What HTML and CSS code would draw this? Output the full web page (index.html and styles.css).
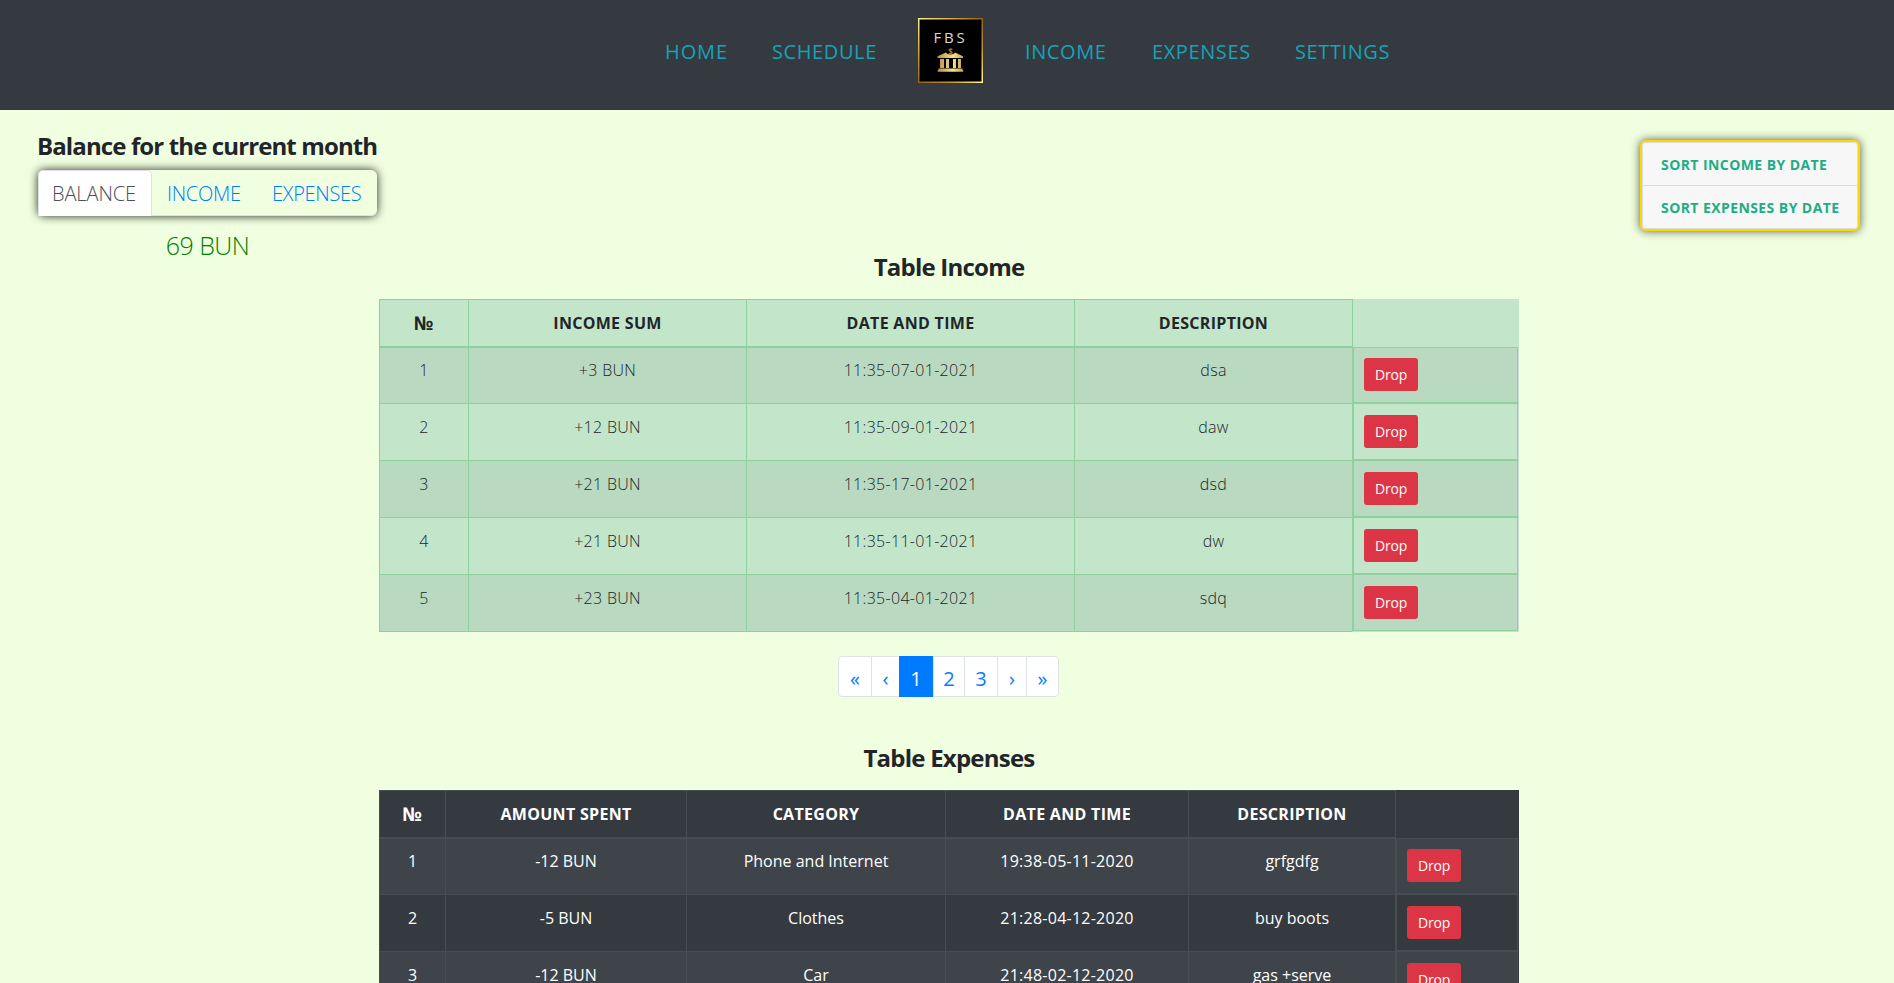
FILE: index.html
```html
<!DOCTYPE html>
<html lang="en">
<head>
<meta charset="utf-8">
<title>FBS</title>
<link rel="stylesheet" href="styles.css">
</head>
<body>
<header class="navbar">
  <nav class="nav nav-left"><a class="w-home">HOME</a><a class="w-schedule">SCHEDULE</a></nav>
  <svg class="logo" width="65" height="65" viewBox="0 0 65 65">
    <defs>
      <linearGradient id="frame" x1="0" y1="0" x2="1" y2="1"><stop offset="0" stop-color="#fbf08c"/><stop offset=".25" stop-color="#d6a94a"/><stop offset=".5" stop-color="#955f1c"/><stop offset=".75" stop-color="#c4923c"/><stop offset="1" stop-color="#fff697"/></linearGradient>
      <linearGradient id="gold" x1="0" y1="0" x2="1" y2="0"><stop offset="0" stop-color="#b98a45"/><stop offset=".6" stop-color="#f5e28a"/><stop offset="1" stop-color="#c99c50"/></linearGradient>
    </defs>
    <rect x=".75" y=".75" width="63.5" height="63.5" fill="#000" stroke="url(#frame)" stroke-width="1.5"/>
    <text class="logo-text" x="15.5" y="25">FBS</text>
    <path fill="url(#gold)" d="M19.5 40v-1.8L28 34.5c1 2.5 8 2.5 9 0l8 3.700V40zM22 41h4v9h-4zM28 41h3v9h-3zM35 41h3v9h-3zM40 41h3v9h-3zM20.500 50.500h24v1.300h.7v1.900H19.700v-1.900h.8z"/>
    <text class="logo-coin" x="32.500" y="37.300">$</text>
  </svg>
  <nav class="nav nav-right"><a class="w-income">INCOME</a><a class="w-expenses">EXPENSES</a><a class="w-settings">SETTINGS</a></nav>
</header>
<section class="summary">
  <div class="balance">
    <h2 class="title balance-title">Balance for the current month</h2>
    <div class="tabs"><a class="tab active">BALANCE</a><a class="tab tab-income">INCOME</a><a class="tab tab-expenses">EXPENSES</a></div>
    <div class="amount">69 BUN</div>
  </div>
  <div class="sort"><a>SORT INCOME BY DATE</a><a class="sort-exp">SORT EXPENSES BY DATE</a></div>
</section>
<main class="content">
  <h2 class="title">Table Income</h2>
  <div class="table income">
    <div class="row head"><b>№</b><b>INCOME SUM</b><b>DATE AND TIME</b><b>DESCRIPTION</b><b></b></div>
    <div class="row"><span>1</span><span>+3 BUN</span><span>11:35-07-01-2021</span><span>dsa</span><div class="action"><div class="box"><button>Drop</button></div></div></div>
    <div class="row"><span>2</span><span>+12 BUN</span><span>11:35-09-01-2021</span><span>daw</span><div class="action"><div class="box"><button>Drop</button></div></div></div>
    <div class="row"><span>3</span><span>+21 BUN</span><span>11:35-17-01-2021</span><span>dsd</span><div class="action"><div class="box"><button>Drop</button></div></div></div>
    <div class="row"><span>4</span><span>+21 BUN</span><span>11:35-11-01-2021</span><span>dw</span><div class="action"><div class="box"><button>Drop</button></div></div></div>
    <div class="row"><span>5</span><span>+23 BUN</span><span>11:35-04-01-2021</span><span>sdq</span><div class="action"><div class="box"><button>Drop</button></div></div></div>
  </div>
  <div class="pages"><a>«</a><a>‹</a><a class="on">1</a><a>2</a><a>3</a><a>›</a><a>»</a></div>
  <h2 class="title">Table Expenses</h2>
  <div class="table expenses">
    <div class="row head"><b>№</b><b>AMOUNT SPENT</b><b>CATEGORY</b><b>DATE AND TIME</b><b>DESCRIPTION</b><b></b></div>
    <div class="row"><span>1</span><span>-12 BUN</span><span>Phone and Internet</span><span class="date">19:38-05-11-2020</span><span>grfgdfg</span><div class="action"><div class="box"><button>Drop</button></div></div></div>
    <div class="row"><span>2</span><span>-5 BUN</span><span>Clothes</span><span class="date">21:28-04-12-2020</span><span>buy boots</span><div class="action"><div class="box"><button>Drop</button></div></div></div>
    <div class="row"><span>3</span><span>-12 BUN</span><span>Car</span><span class="date">21:48-02-12-2020</span><span>gas +serve</span><div class="action"><div class="box"><button>Drop</button></div></div></div>
  </div>
</main>
</body>
</html>
```
FILE: styles.css
```css
* { box-sizing: border-box; }
body { margin: 0; height: 983px; overflow: hidden; background: #f0ffdf; color: #212529; font-family: "Open Sans", "Noto Sans", sans-serif; font-size: 16px; white-space: nowrap; }
.navbar { height: 110px; background: #343a40; display: flex; padding: 18px 0 0 665px; }
.nav { display: flex; padding-top: 19px; line-height: 30px; font-size: 20px; letter-spacing: .6px; color: #17a2b8; }
.nav-left { width: 253px; }
.nav-right { padding-left: 42px; }
.w-home { width: 107px; letter-spacing: .9px; }
.w-income { width: 127px; }
.w-expenses { width: 143px; }
.logo-text { font-family: "Open Sans", sans-serif; font-size: 15px; fill: #d8d8d8; letter-spacing: 2.800px; }
.logo-coin { font-family: "Open Sans", sans-serif; font-size: 8px; font-weight: 700; fill: #b17b34; text-anchor: middle; }
.title { margin: 0; font-size: 24px; font-weight: 700; line-height: 31px; letter-spacing: -.77px; }
.balance-title { height: 30px; margin-left: -1px; letter-spacing: -.88px; line-height: 32px; }
.summary { height: 141px; display: flex; justify-content: space-between; padding: 0 34px 0 38px; }
.balance { width: 339px; padding-top: 20px; }
.tabs { margin-top: 10px; height: 46px; display: flex; border-radius: 6px; border-bottom: 1px solid #dee2e6; box-shadow: 0 0 10px rgba(0,0,0,.85); font-size: 20px; font-weight: 340; line-height: 48px; letter-spacing: -.3px; color: #007bff; }
.tab { height: 46px; padding-left: 15px; width: 105px; }
.tab.active { width: 114px; padding-left: 13px; background: #fff; border: 1px solid #dee2e6; border-bottom: 0; border-radius: 5px 5px 0 0; color: #495057; line-height: 46px; letter-spacing: -.1px; }
.amount { margin-top: 12px; font-size: 25px; font-weight: 340; line-height: 34px; letter-spacing: -.5px; color: #008000; text-align: center; }
.sort { margin-top: 30px; width: 220px; height: 91px; border: 2px solid #ffd600; border-radius: 6px; background: #f7f7f7; box-shadow: 0 0 10px rgba(0,0,0,.65); font-size: 14px; font-weight: 700; letter-spacing: .42px; color: #20ad84; display: flex; flex-direction: column; }
.sort a { height: 44px; line-height: 43px; padding-left: 18px; border: 1px solid #dbdcde; border-radius: 4px 4px 0 0; }
.sort .sort-exp { height: 43px; border-top: 0; border-radius: 0 0 4px 4px; }
.content { width: 1140px; margin: 0 auto 0 379px; text-align: center; display: flex; flex-direction: column; }
.content .title { height: 48px; }
.row { display: grid; height: 57px; }
.income .row { grid-template-columns: 89px 278px 328px 278px 167px; }
.expenses .row { grid-template-columns: 66px 241px 259px 243px 207px 124px; }
.row span { border-left: 1px solid var(--line); border-bottom: 1px solid var(--line); line-height: 46px; }
.row b { border: 1px solid var(--line); border-width: 1px 0 2px 1px; line-height: 46px; }
.row b:first-child { font-size: 19px; }
.row b:last-child { border-width: 0 0 1px 1px; }
.row.head { height: 48px; background: var(--bg); letter-spacing: .3px; }
.row { background: var(--bg); }
.row:nth-child(even) { background: var(--stripe); }
.income { --bg: #c3e6cb; --stripe: #b9d9c1; --line: #8fd19e; }
.income .row span { font-weight: 340; letter-spacing: .3px; }
.expenses { --bg: #343a40; --stripe: #3e444a; --line: #454d55; color: #fff; height: 200px; }
.expenses .date { letter-spacing: .25px; }
.action { border: 1px solid var(--line); border-width: 0 1px 1px 1px; border-right-color: #ccdfd3; text-align: left; }
.expenses .action { border-right-color: #343a40; }
.income .row:last-child .action { border-bottom-color: #ccdfd3; }
.box { height: 56px; border: 1px solid var(--line); border-top: 0; padding: 11px 0 0 10px; }
button { display: block; width: 54px; height: 33px; padding: 0; border: 0; border-radius: 3px; background: #dc3545; color: #fff; font: 14px/34px "Open Sans", sans-serif; letter-spacing: -.2px; }
.pages { align-self: flex-start; margin: 24px 0 44px 459px; height: 41px; width: 221px; display: grid; grid-template-columns: 32px 28px 34px 31px 33px 29px 32px; border: 1px solid #dee2e6; border-radius: 4px; background: #fff; font-size: 20px; line-height: 43px; color: #007bff; }
.pages + .title { height: 49px; line-height: 33px; }
.pages a { border-left: 1px solid #dee2e6; height: 39px; }
.pages a:first-child { border: 0; }
.pages .on { background: #007bff; color: #fff; border: 0; height: 41px; margin-top: -1px; line-height: 45px; }
```
